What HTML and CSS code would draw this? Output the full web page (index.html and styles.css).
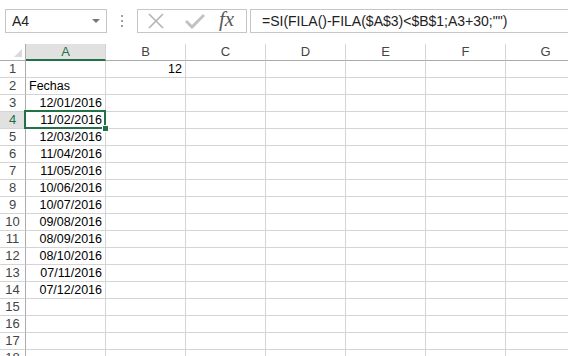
FILE: index.html
```
<!DOCTYPE html>
<html lang="es">
  <head>
    <meta charset="UTF-8" />
    <title>Libro1 - Excel</title>
    <link rel="stylesheet" href="styles.css">
  </head>
  <body>
    <div class="formula-bar">
      <div class="name-box">
        <span>A4</span>
        <span class="caret"></span>
      </div>
      <div class="grip"><i></i><i></i><i></i></div>
      <div class="fx-buttons">
        <svg class="icon-x" width="16" height="16" viewBox="0 0 16 16">
          <path d="M1 1 L15 15 M15 1 L1 15" stroke="#b4b4b4" stroke-width="1.6" fill="none" />
        </svg>
        <svg class="icon-ok" width="20" height="16" viewBox="0 0 20 16">
          <path d="M1 8 L7 14 L19 2" stroke="#c2c2c2" stroke-width="3" fill="none" />
        </svg>
        <span class="fx">fx</span>
      </div>
      <div class="formula">=SI(FILA()-FILA($A$3)&lt;$B$1;A3+30;"")</div>
    </div>

    <div class="sheet" id="sheet">
      <div class="corner"><span class="tri"></span></div>
      <div class="col-head active">A</div>
      <div class="col-head">B</div>
      <div class="col-head">C</div>
      <div class="col-head">D</div>
      <div class="col-head">E</div>
      <div class="col-head">F</div>
      <div class="col-head">G</div>
    </div>

    <script>
      const sheet = document.getElementById("sheet");
      const data = {
        1: ["", "12"],
        2: ["Fechas", ""],
        3: ["12/01/2016"], 4: ["11/02/2016"], 5: ["12/03/2016"],
        6: ["11/04/2016"], 7: ["11/05/2016"], 8: ["10/06/2016"],
        9: ["10/07/2016"], 10: ["09/08/2016"], 11: ["08/09/2016"],
        12: ["08/10/2016"], 13: ["07/11/2016"], 14: ["07/12/2016"]
      };

      for (let r = 1; r <= 18; r++) {
        const head = document.createElement("div");
        head.className = r === 4 ? "row-head active" : "row-head";
        head.innerText = r;
        sheet.appendChild(head);
        const row = data[r] || [];
        for (let c = 0; c < 7; c++) {
          const cell = document.createElement("div");
          cell.className = "cell";
          const val = row[c] || "";
          if (val && val !== "Fechas") cell.classList.add("num");
          cell.innerText = val;
          if (r === 4 && c === 0) {
            cell.classList.add("selected");
            const handle = document.createElement("span");
            handle.className = "handle";
            cell.appendChild(handle);
          }
          sheet.appendChild(cell);
        }
      }
    </script>
  </body>
</html>
```

FILE: styles.css
```
body {
  margin: 0;
  background: #fff;
  font-family: "Liberation Sans", Arial, sans-serif;
  overflow: hidden;
  width: 568px;
  height: 356px;
}
.formula-bar {
  display: flex;
  align-items: center;
  padding: 9px 0 0 5px;
  height: 24px;
  white-space: nowrap;
}
.name-box {
  box-sizing: border-box;
  width: 102px;
  height: 24px;
  border: 1px solid #c6c6c6;
  display: flex;
  align-items: center;
  justify-content: space-between;
  padding: 0 6px 0 6px;
  font-size: 14px;
  color: #222;
}
.caret {
  width: 0;
  height: 0;
  border-left: 4px solid transparent;
  border-right: 4px solid transparent;
  border-top: 4px solid #777;
}
.grip {
  width: 30px;
  display: flex;
  flex-direction: column;
  align-items: center;
  gap: 3px;
}
.grip i {
  width: 2px;
  height: 2px;
  background: #a0a0a0;
}
.fx-buttons {
  box-sizing: border-box;
  width: 110px;
  height: 24px;
  border: 1px solid #c6c6c6;
  display: flex;
  align-items: center;
  padding-left: 10px;
}
.icon-x {
  margin-right: 21px;
}
.icon-ok {
  margin-right: 14px;
}
.fx {
  font-family: "Liberation Serif", "Times New Roman", serif;
  font-style: italic;
  font-size: 21px;
  color: #5a5a5a;
  margin-top: -3px;
}
.formula {
  box-sizing: border-box;
  margin-left: 3px;
  flex: 1;
  height: 24px;
  border: 1px solid #c6c6c6;
  border-right: none;
  padding: 3px 0 0 11px;
  font-size: 14px;
  color: #222;
}
.sheet {
  margin-top: 11px;
  display: grid;
  grid-template-columns: 26px repeat(7, 80px);
  grid-auto-rows: 17px;
  font-size: 12.5px;
}
.corner,
.col-head,
.row-head,
.cell {
  box-sizing: border-box;
  border-right: 1px solid #d4d4d4;
  border-bottom: 1px solid #d4d4d4;
}
.corner {
  position: relative;
  border-bottom: 1px solid #ababab;
  border-right-color: #ababab;
}
.tri {
  position: absolute;
  right: 3px;
  bottom: 3px;
  width: 0;
  height: 0;
  border-left: 8px solid transparent;
  border-bottom: 8px solid #dadada;
}
.col-head {
  text-align: center;
  color: #444;
  font-size: 13px;
  line-height: 16px;
  border-bottom-color: #ababab;
}
.col-head.active {
  background: #e1e1e1;
  color: #217346;
  border-bottom: 2px solid #217346;
  line-height: 16px;
}
.row-head {
  text-align: center;
  color: #444;
  font-size: 13px;
  line-height: 16px;
  border-right-color: #ababab;
}
.row-head.active {
  background: #e1e1e1;
  color: #217346;
}
.cell {
  position: relative;
  line-height: 16px;
  padding: 0 3px;
  color: #000;
}
.cell.num {
  text-align: right;
}
.cell.selected::after {
  content: "";
  position: absolute;
  left: -2px;
  top: -2px;
  right: -1px;
  bottom: -1px;
  border: 2px solid #217346;
}
.handle {
  position: absolute;
  right: -4px;
  bottom: -4px;
  width: 5px;
  height: 5px;
  background: #217346;
  border: 1px solid #fff;
  z-index: 1;
}
```
